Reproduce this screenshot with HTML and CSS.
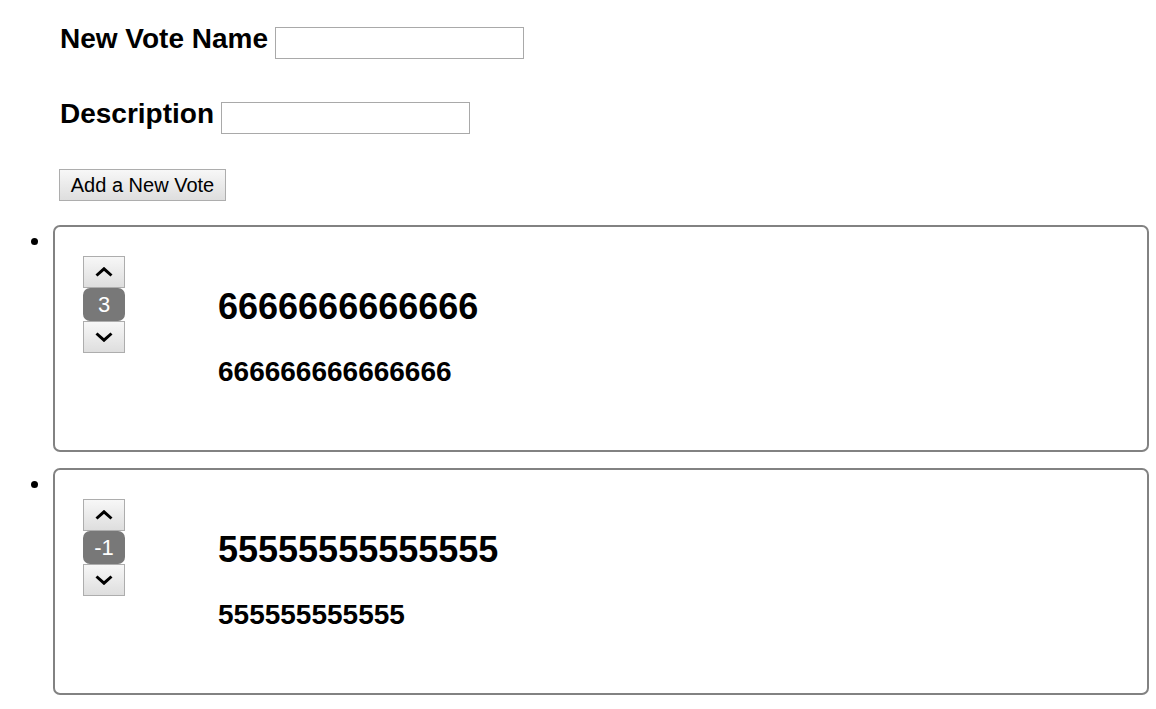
FILE: index.html
```html
<!DOCTYPE html>
<html>
<head>
<meta charset="utf-8">
<link rel="stylesheet" href="styles.css">
</head>
<body>
<div class="form">
  <div class="row">
    <h3 class="label">New Vote Name</h3>
    <input class="field" type="text">
  </div>
  <div class="row row2">
    <h3 class="label">Description</h3>
    <input class="field" type="text">
  </div>
  <button class="add">Add a New Vote</button>
</div>
<ul class="votes">
  <li class="item">
    <span class="dot"></span>
    <div class="box">
      <div class="ctrl">
        <button class="arrow"><svg width="18" height="10" viewBox="0 0 18 10"><path d="M1.5 8.5 L9 1.8 L16.5 8.5" fill="none" stroke="#000" stroke-width="3"/></svg></button>
        <div class="count">3</div>
        <button class="arrow"><svg width="18" height="10" viewBox="0 0 18 10"><path d="M1.5 1.5 L9 8.2 L16.5 1.5" fill="none" stroke="#000" stroke-width="3"/></svg></button>
      </div>
      <div class="content">
        <h2 class="title">6666666666666</h2>
        <h3 class="desc">666666666666666</h3>
      </div>
    </div>
  </li>
  <li class="item">
    <span class="dot"></span>
    <div class="box">
      <div class="ctrl">
        <button class="arrow"><svg width="18" height="10" viewBox="0 0 18 10"><path d="M1.5 8.5 L9 1.8 L16.5 8.5" fill="none" stroke="#000" stroke-width="3"/></svg></button>
        <div class="count">-1</div>
        <button class="arrow"><svg width="18" height="10" viewBox="0 0 18 10"><path d="M1.5 1.5 L9 8.2 L16.5 1.5" fill="none" stroke="#000" stroke-width="3"/></svg></button>
      </div>
      <div class="content">
        <h2 class="title">55555555555555</h2>
        <h3 class="desc">555555555555</h3>
      </div>
    </div>
  </li>
</ul>
</body>
</html>
```
FILE: styles.css
```css
html, body {
  margin: 0;
  padding: 0;
  background: #fff;
}
body {
  font-family: "Liberation Sans", Arial, sans-serif;
  color: #000;
}
.form {
  padding: 23px 0 0 60px;
}
.row {
  display: flex;
  align-items: flex-start;
  gap: 8px;
  height: 75px;
}
.label {
  margin: 0;
  font-size: 28px;
  font-weight: bold;
  line-height: 32px;
}
.field {
  margin: 4px 0 0 -1px;
  box-sizing: border-box;
  width: 249px;
  height: 32px;
  border: 1px solid #a9a9a9;
  padding: 2px 4px;
  font-size: 20px;
  font-family: "Liberation Sans", Arial, sans-serif;
  background: #fff;
}
.add {
  margin: -4px 0 0 -1px;
  box-sizing: border-box;
  width: 167px;
  height: 32px;
  border: 1px solid #adadad;
  border-radius: 0;
  background: linear-gradient(#f7f7f7, #dedede);
  font-family: "Liberation Sans", Arial, sans-serif;
  font-size: 20px;
  color: #000;
  padding: 0 10px;
}
.votes {
  list-style: none;
  margin: 24px 0 0 0;
  padding: 0 7px 0 31px;
}
.item {
  display: flex;
  align-items: flex-start;
  margin-bottom: 16px;
}
.dot {
  flex: none;
  width: 7px;
  height: 7px;
  margin: 13px 15px 0 0;
  border-radius: 50%;
  background: #000;
}
.box {
  flex: 1;
  box-sizing: border-box;
  height: 227px;
  border: 2px solid #828282;
  border-radius: 7px;
  padding: 29px 28px 0 28px;
  display: flex;
  align-items: flex-start;
}
.ctrl {
  width: 42px;
  display: flex;
  flex-direction: column;
}
.arrow {
  box-sizing: border-box;
  width: 42px;
  height: 32px;
  margin: 0;
  padding: 0;
  border: 1px solid #adadad;
  border-radius: 0;
  background: linear-gradient(#f7f7f7, #dedede);
  display: flex;
  align-items: center;
  justify-content: center;
}
.count {
  box-sizing: border-box;
  height: 33px;
  margin: 0;
  background: #787878;
  border-radius: 7px;
  color: #fff;
  font-size: 22px;
  line-height: 33px;
  text-align: center;
}
.content {
  margin-left: 93px;
}
.title {
  margin: 30px 0 0 0;
  font-size: 36px;
  font-weight: bold;
  line-height: 41px;
}
.desc {
  margin: 29px 0 0 0;
  font-size: 28px;
  font-weight: bold;
  line-height: 32px;
}
```
